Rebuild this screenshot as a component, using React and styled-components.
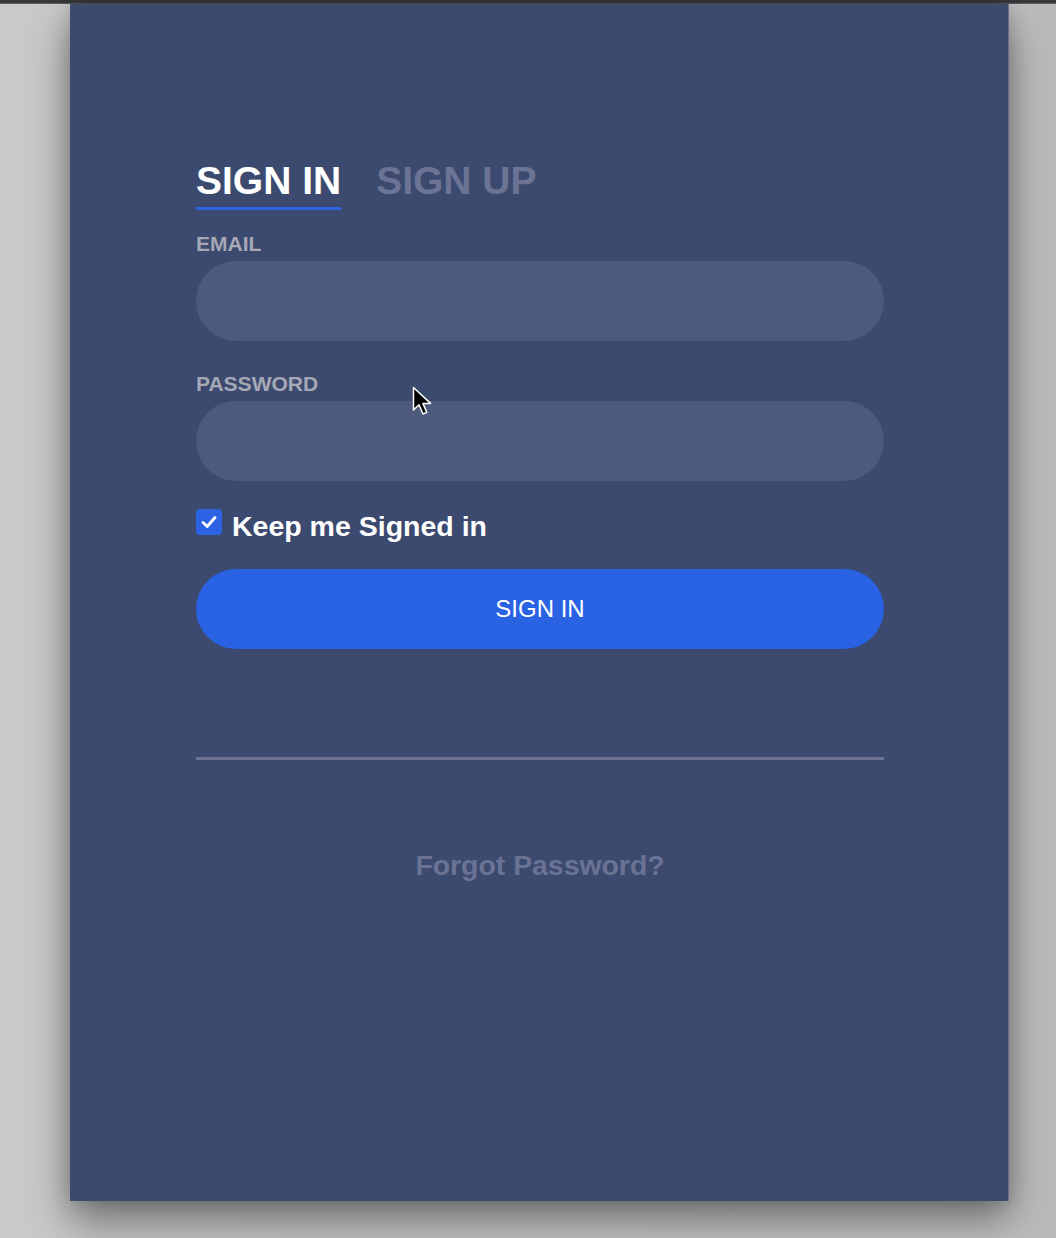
import React from "react";
import styled, { createGlobalStyle } from "styled-components";

const Global = createGlobalStyle`
  html, body { margin: 0; padding: 0; }
  body {
    background: #c7c7c7;
    font-family: "Liberation Sans", Arial, Helvetica, sans-serif;
    overflow: hidden;
  }
  * { box-sizing: border-box; }
`;

const Screen = styled.div`
  width: 1056px;
  height: 1238px;
  position: relative;
  overflow: hidden;
  background: linear-gradient(to right, #c9c9c9 0%, #c6c6c6 92%, #b9b9b9 100%);
`;

const TopBar = styled.div`
  height: 4px;
  background: #39393b;
  border-bottom: 1px solid #5a5a5c;
`;

const Stage = styled.div`
  padding-left: 70px;
`;

const Card = styled.main`
  position: relative;
  width: 939px;
  height: 1197px;
  background: #3b4a6e;
  box-shadow: 0 22px 40px rgba(0, 0, 0, 0.42), 0 0 18px rgba(0, 0, 0, 0.18);
  border-right: 1px solid #6a7088;
  padding: 157px 124px 0 126px;
  display: flex;
  flex-direction: column;
`;

const Tabs = styled.nav`
  display: flex;
  gap: 35px;
`;

const Tab = styled.span`
  font-size: 39px;
  line-height: 39px;
  font-weight: 700;
  color: ${(p) => (p.$active ? "#ffffff" : "#6b7494")};
  padding-bottom: 7px;
  border-bottom: 3px solid ${(p) => (p.$active ? "#2b63e4" : "transparent")};
`;

const Field = styled.div`
  display: flex;
  flex-direction: column;
  margin-top: ${(p) => p.$top}px;
`;

const Label = styled.label`
  font-size: 21px;
  line-height: 20px;
  font-weight: 700;
  color: #a6a8b5;
  margin-bottom: 7px;
`;

const Input = styled.div`
  height: 80px;
  border-radius: 40px;
  background: #4d5a7b;
`;

const CheckRow = styled.div`
  display: flex;
  align-items: flex-start;
  gap: 10px;
  margin-top: 28px;
`;

const CheckBox = styled.span`
  width: 26px;
  height: 26px;
  border-radius: 4px;
  background: #2b63e4;
  display: flex;
  align-items: center;
  justify-content: center;
`;

const CheckLabel = styled.span`
  font-size: 28.5px;
  line-height: 28px;
  font-weight: 700;
  color: #ffffff;
  margin-top: 3px;
`;

const Button = styled.button`
  margin-top: 29px;
  height: 80px;
  border: none;
  border-radius: 40px;
  background: #2962e3;
  color: #ffffff;
  font-family: "Liberation Sans", Arial, Helvetica, sans-serif;
  font-size: 24px;
  font-weight: 400;
`;

const Divider = styled.hr`
  margin: 108px 0 0;
  border: none;
  height: 3px;
  background: #6b7391;
`;

const Forgot = styled.a`
  margin-top: 91px;
  text-align: center;
  font-size: 28.4px;
  line-height: 28px;
  font-weight: 700;
  color: #6a7394;
`;

const Cursor = styled.svg`
  position: absolute;
  left: 412px;
  top: 386px;
`;

export default function App() {
  return (
    <Screen>
      <Global />
      <TopBar />
      <Stage>
        <Card>
          <Tabs>
            <Tab $active>SIGN IN</Tab>
            <Tab>SIGN UP</Tab>
          </Tabs>
          <Field $top={24}>
            <Label>EMAIL</Label>
            <Input />
          </Field>
          <Field $top={33}>
            <Label>PASSWORD</Label>
            <Input />
          </Field>
          <CheckRow>
            <CheckBox>
              <svg width="18" height="18" viewBox="0 0 18 18">
                <path d="M3 9.5 L7.2 13.5 L15 4.5" fill="none" stroke="#fff" strokeWidth="2.8" strokeLinecap="round" strokeLinejoin="round" />
              </svg>
            </CheckBox>
            <CheckLabel>Keep me Signed in</CheckLabel>
          </CheckRow>
          <Button>SIGN IN</Button>
          <Divider />
          <Forgot>Forgot Password?</Forgot>
        </Card>
      </Stage>
      <Cursor width="22" height="34" viewBox="0 0 22 34">
        <path d="M1.5 1.5 L1.5 24 L7 18.8 L11 28 L14.8 26.4 L10.9 17.4 L18.5 17.4 Z" fill="#000" stroke="#fff" strokeWidth="1.5" strokeLinejoin="round" />
      </Cursor>
    </Screen>
  );
}
